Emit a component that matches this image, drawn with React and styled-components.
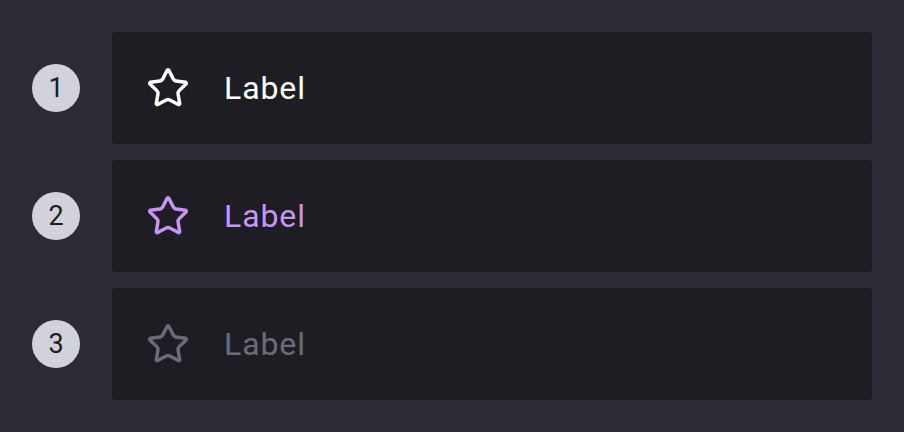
import React from "react"
import styled, { createGlobalStyle } from "styled-components"
import { Star } from "lucide-react"

const GlobalStyle = createGlobalStyle`
  html, body {
    margin: 0;
    background: #2c2b36;
  }
  body {
    font-family: Roboto, "Noto Sans", sans-serif;
  }
`

const items = [
  { id: 1, state: "default" },
  { id: 2, state: "active" },
  { id: 3, state: "disabled" },
]

const colors = {
  default: "#ffffff",
  active: "#c894f4",
  disabled: "#6d6c74",
}

const App = () => {
  return (
    <>
      <GlobalStyle />
      <Page>
        {items.map((item) => (
          <Row key={item.id}>
            <Badge>{item.id}</Badge>
            <Card $state={item.state}>
              <IconBox>
                <Star size={44} strokeWidth={1.9} />
              </IconBox>
              <Text>Label</Text>
            </Card>
          </Row>
        ))}
      </Page>
    </>
  )
}

export default App

const Page = styled.div`
  width: 904px;
  height: 432px;
  box-sizing: border-box;
  padding: 32px;
  display: flex;
  flex-direction: column;
  gap: 16px;
`

const Row = styled.div`
  display: flex;
  align-items: center;
  gap: 32px;
`

const Badge = styled.div`
  width: 48px;
  height: 48px;
  flex-shrink: 0;
  border-radius: 50%;
  background: #d2d2dc;
  color: #1d1c22;
  display: flex;
  align-items: center;
  justify-content: center;
  font-size: 27px;
`

const Card = styled.div`
  width: 760px;
  height: 112px;
  box-sizing: border-box;
  background: #1e1d23;
  border-radius: 4px;
  display: flex;
  align-items: center;
  padding-left: 34px;
  gap: 34px;
  color: ${(p) => colors[p.$state]};
`

const IconBox = styled.div`
  width: 44px;
  height: 44px;
  display: flex;
  align-items: center;
  justify-content: center;
`

const Text = styled.span`
  font-size: 32px;
  letter-spacing: 0.9px;
`
